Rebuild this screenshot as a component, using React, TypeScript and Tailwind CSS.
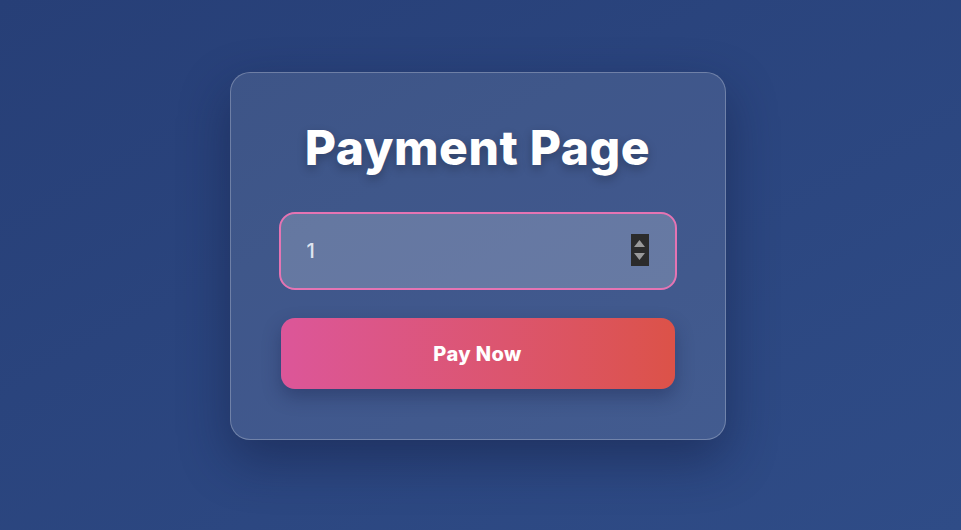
import { useState } from "react";

export default function App() {
  const [amount, setAmount] = useState("1");

  return (
    <div
      className="min-h-screen w-full flex items-center justify-center bg-gradient-to-br from-[#273f77] to-[#2f4c87]"
      style={{ fontFamily: "Inter, 'Noto Sans', sans-serif" }}
    >
      <div className="w-[496px] h-[368px] -mt-[18px] mr-[6px] rounded-[20px] border border-white/25 bg-white/10 shadow-[0_20px_50px_rgba(15,25,60,0.45)] px-[48px] pt-[45px] flex flex-col">
        <h1 className="text-center text-white text-[48px] leading-[60px] font-extrabold tracking-[0.6px] [text-shadow:0_4px_10px_rgba(0,0,0,0.25)]">
          Payment Page
        </h1>

        {/* amount input */}
        <div className="relative mt-[34px]">
          <input
            type="text"
            value={amount}
            autoFocus
            onChange={(e) => setAmount(e.target.value)}
            className="w-full h-[78px] rounded-[16px] border-2 border-[#e574b3] bg-white/20 pl-[26px] text-[20px] font-medium text-[#dfe4f0] caret-white outline-none"
          />
          <div className="absolute right-[28px] top-[22px] w-[18px] h-[32px] bg-[#2b2b2b] flex flex-col items-center justify-center gap-[6px]">
            <svg width="11" height="7" viewBox="0 0 11 7">
              <path d="M5.5 0 L11 7 L0 7 Z" fill="#9a9a9a" />
            </svg>
            <svg width="11" height="7" viewBox="0 0 11 7">
              <path d="M0 0 L11 0 L5.5 7 Z" fill="#9a9a9a" />
            </svg>
          </div>
        </div>

        <button className="mt-[28px] mx-[2px] h-[71px] rounded-[14px] bg-gradient-to-r from-[#dc5699] to-[#dc5248] text-white text-[20px] font-extrabold tracking-[0.4px] shadow-[0_8px_18px_rgba(20,30,70,0.35)]">
          Pay Now
        </button>
      </div>
    </div>
  );
}
